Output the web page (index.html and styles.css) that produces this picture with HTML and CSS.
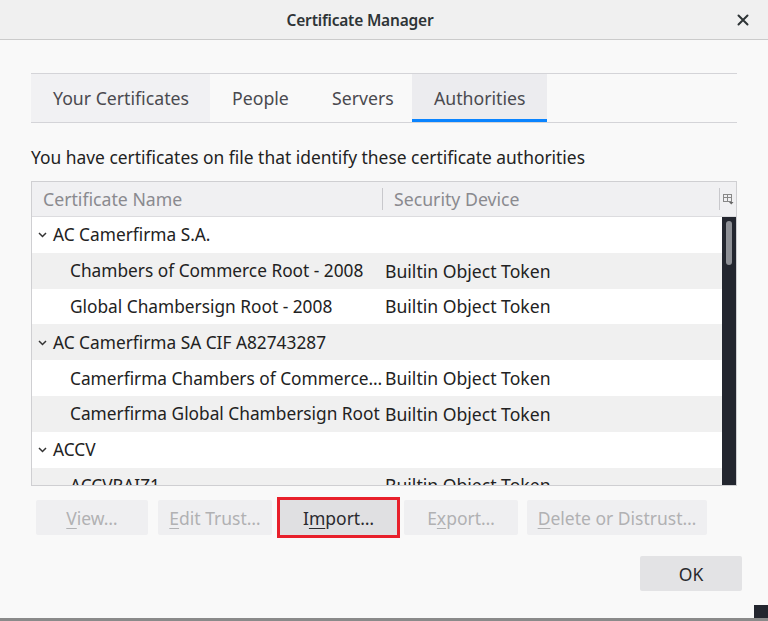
FILE: index.html
```html
<!DOCTYPE html>
<html>
<head>
<meta charset="utf-8">
<link rel="stylesheet" href="styles.css">
</head>
<body>
<div class="window">
  <div class="titlebar">
    <span class="title">Certificate Manager</span>
    <span class="close">
      <svg width="12" height="12" viewBox="0 0 12 12"><path d="M1.5 1.5 L10.5 10.5 M10.5 1.5 L1.5 10.5" stroke="#2e3436" stroke-width="2" stroke-linecap="round"/></svg>
    </span>
  </div>
  <div class="content">
    <div class="tabs">
      <div class="tab tab-hover">Your Certificates</div>
      <div class="tab">People</div>
      <div class="tab">Servers</div>
      <div class="tab tab-selected">Authorities</div>
    </div>
    <p class="desc">You have certificates on file that identify these certificate authorities</p>
    <div class="tree">
      <div class="tree-head">
        <div class="col-name">Certificate Name</div>
        <div class="col-sep"></div>
        <div class="col-dev">Security Device</div>
        <div class="col-picker">
          <svg width="11" height="11" viewBox="0 0 11 11"><rect x="0.5" y="0.5" width="8" height="7" fill="none" stroke="#888" stroke-width="1"/><path d="M0.5 3.5 H8.5 M4.5 0.5 V7.5" stroke="#888" stroke-width="1"/><path d="M6 8 L10.5 8 L8.25 10.5 Z" fill="#666"/></svg>
        </div>
      </div>
      <div class="tree-body">
        <div class="rows">
          <div class="row group"><span class="twisty"><svg width="9" height="6" viewBox="0 0 9 6"><path d="M1 1 L4.5 4.5 L8 1" fill="none" stroke="#333" stroke-width="1.5"/></svg></span><span class="cell-name">AC Camerfirma S.A.</span></div>
          <div class="row alt"><span class="cell-name child">Chambers of Commerce Root - 2008</span><span class="cell-dev">Builtin Object Token</span></div>
          <div class="row"><span class="cell-name child">Global Chambersign Root - 2008</span><span class="cell-dev">Builtin Object Token</span></div>
          <div class="row group alt"><span class="twisty"><svg width="9" height="6" viewBox="0 0 9 6"><path d="M1 1 L4.5 4.5 L8 1" fill="none" stroke="#333" stroke-width="1.5"/></svg></span><span class="cell-name">AC Camerfirma SA CIF A82743287</span></div>
          <div class="row"><span class="cell-name child">Camerfirma Chambers of Commerce…</span><span class="cell-dev">Builtin Object Token</span></div>
          <div class="row alt"><span class="cell-name child">Camerfirma Global Chambersign Root</span><span class="cell-dev">Builtin Object Token</span></div>
          <div class="row group"><span class="twisty"><svg width="9" height="6" viewBox="0 0 9 6"><path d="M1 1 L4.5 4.5 L8 1" fill="none" stroke="#333" stroke-width="1.5"/></svg></span><span class="cell-name">ACCV</span></div>
          <div class="row alt"><span class="cell-name child">ACCVRAIZ1</span><span class="cell-dev">Builtin Object Token</span></div>
        </div>
        <div class="scrollbar"><div class="thumb"></div></div>
      </div>
    </div>
    <div class="actions">
      <button class="btn btn-view" disabled><u>V</u>iew…</button>
      <button class="btn btn-edit" disabled><u>E</u>dit Trust…</button>
      <button class="btn btn-import">I<u>m</u>port…</button>
      <button class="btn btn-export" disabled>E<u>x</u>port…</button>
      <button class="btn btn-delete" disabled><u>D</u>elete or Distrust…</button>
    </div>
    <div class="footer">
      <button class="btn btn-ok">OK</button>
    </div>
  </div>
  <div class="corner"></div>
</div>
</body>
</html>
```
FILE: styles.css
```css
* { box-sizing: border-box; }
html, body {
  margin: 0;
  padding: 0;
  width: 768px;
  height: 621px;
  overflow: hidden;
  background: #f9f9f9;
  font-family: "Noto Sans", "Open Sans", sans-serif;
  color: #2e2e2e;
}
.window {
  position: relative;
  width: 768px;
  height: 621px;
  border-bottom: 3px solid #8a8a8a;
}
.titlebar {
  height: 40px;
  background: #f0f0f0;
  border-bottom: 1px solid #cbcbcb;
  display: flex;
  align-items: center;
  justify-content: center;
  padding-right: 48px;
  position: relative;
}
.title {
  font-size: 15.5px;
  font-weight: 600;
  color: #2e3436;
  letter-spacing: -0.2px;
}
.close {
  position: absolute;
  right: 19px;
  top: 14px;
  width: 12px;
  height: 12px;
  display: flex;
}
.content {
  padding: 33px 31px 0 31px;
}
.tabs {
  display: flex;
  height: 50px;
  border-top: 1px solid #d4d4d8;
  border-bottom: 1px solid #d4d4d8;
}
.tab {
  font-size: 17.7px;
  color: #4a4a4f;
  padding: 0 22px;
  display: flex;
  align-items: center;
  height: 48px;
  white-space: nowrap;
}
.tab-hover {
  background: #f1f1f3;
  width: 179px;
}
.tab:nth-child(2) { width: 100px; }
.tab:nth-child(3) { width: 102px; }
.tab-selected {
  background: #ececef;
  width: 135px;
  border-bottom: 3px solid #0a84ff;
  padding-top: 3px;
}
.desc {
  margin: 24px 0 14px 0;
  font-size: 17.4px;
  color: #222;
  line-height: 20px;
  white-space: nowrap;
}
.tree {
  width: 706px;
  height: 305px;
  border: 1px solid #cfcfd2;
  background: #fff;
  display: flex;
  flex-direction: column;
}
.tree-head {
  height: 35px;
  flex: none;
  display: flex;
  align-items: center;
  background: #f0f0f2;
  border-bottom: 1px solid #dcdcdf;
  font-size: 17.7px;
  color: #8a8a8f;
}
.col-name {
  width: 350px;
  padding-left: 11px;
  white-space: nowrap;
}
.col-sep {
  width: 1px;
  height: 22px;
  background: #c8c8cc;
}
.col-dev {
  flex: 1;
  padding-left: 11px;
  white-space: nowrap;
}
.col-picker {
  width: 17px;
  height: 22px;
  border-left: 1px solid #c8c8cc;
  display: flex;
  align-items: center;
  justify-content: center;
}
.tree-body {
  flex: 1;
  display: flex;
  overflow: hidden;
}
.rows {
  flex: 1;
  overflow: hidden;
}
.row {
  height: 35.8px;
  display: flex;
  align-items: center;
  font-size: 17.3px;
  color: #222;
  white-space: nowrap;
}
.row.alt { background: #f0f0f0; }
.twisty {
  width: 21px;
  padding-left: 6px;
  display: flex;
  align-items: center;
  margin-top: 1px;
}
.cell-name {
  width: 334px;
}
.cell-name.child {
  padding-left: 38px;
  box-sizing: content-box;
  width: 315px;
  overflow: hidden;
}
.cell-dev {
  font-size: 17.6px;
}
.scrollbar {
  width: 14px;
  flex: none;
  background: #23262f;
  padding: 4px 4px;
}
.thumb {
  width: 6px;
  height: 44px;
  background: #8e9096;
  border-radius: 3px;
}
.actions {
  display: flex;
  margin-top: 14px;
  margin-left: 5px;
}
.btn {
  font-family: "Noto Sans", "Open Sans", sans-serif;
  font-size: 17.5px;
  height: 35px;
  border: none;
  border-radius: 2px;
  background: #efeff1;
  color: #b1b1b3;
  padding: 0;
  white-space: nowrap;
}
.btn u { text-decoration-thickness: 1px; text-underline-offset: 3px; }
.btn-view { width: 112px; margin-right: 10px; }
.btn-edit { width: 114px; margin-right: 8px; }
.btn-import {
  width: 117px;
  color: #2a2a2e;
  background: #e0e0e2;
  border-radius: 0;
  outline: 3px solid #e8202b;
  outline-offset: 0px;
  margin-right: 7px;
}
.btn-export { width: 114px; margin-right: 9px; }
.btn-delete { width: 180px; }
.footer {
  display: flex;
  justify-content: flex-end;
  margin-top: 21px;
  margin-right: -5px;
}
.btn-ok {
  width: 102px;
  color: #2a2a2e;
  background: #e3e3e5;
}
.corner {
  position: absolute;
  right: 0;
  bottom: 0;
  width: 14px;
  height: 13px;
  background: #23262f;
}
```
